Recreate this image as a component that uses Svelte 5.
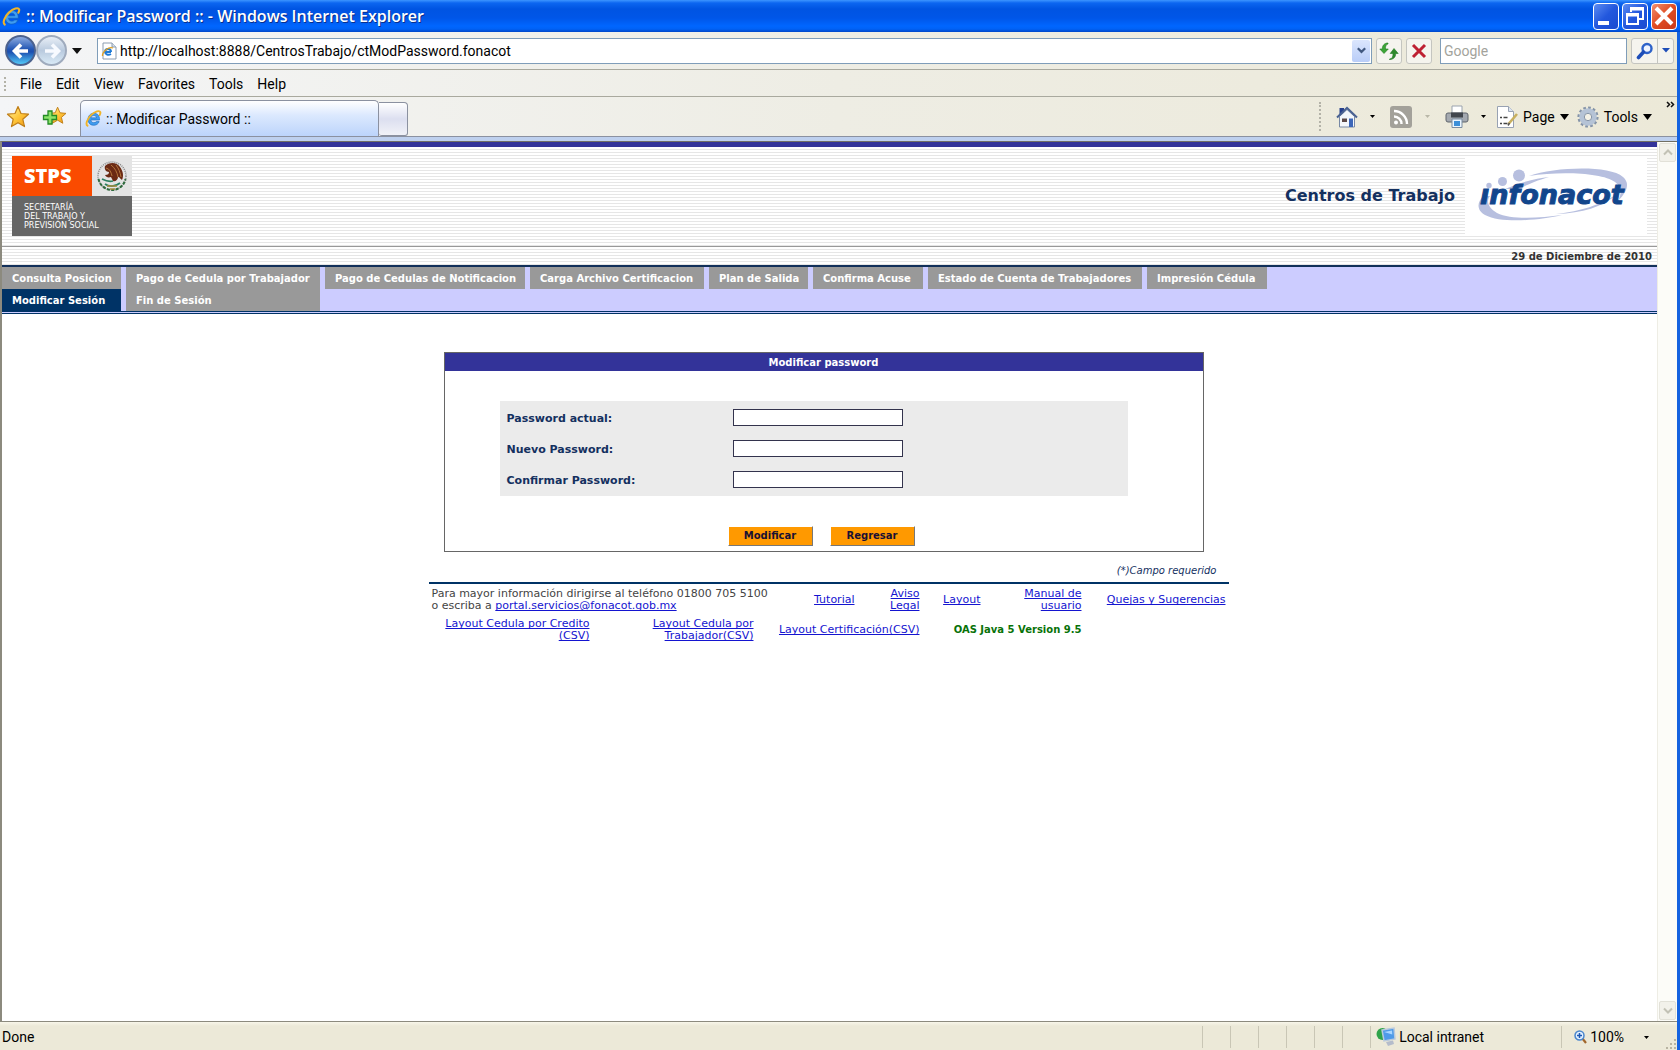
<script>
  const menus = ['File', 'Edit', 'View', 'Favorites', 'Tools', 'Help'];
  const sections = [
    'Consulta Posicion',
    'Pago de Cedula por Trabajador',
    'Pago de Cedulas de Notificacion',
    'Carga Archivo Certificacion',
    'Plan de Salida',
    'Confirma Acuse',
    'Estado de Cuenta de Trabajadores',
    'Impresión Cédula',
    'Modificar Sesión',
    'Fin de Sesión'
  ];
  const active = 'Modificar Sesión';
  const fields = [
    { id: 'actual', label: 'Password actual:' },
    { id: 'nuevo', label: 'Nuevo Password:' },
    { id: 'confirmar', label: 'Confirmar Password:' }
  ];
  const panes = [1, 2, 3, 4, 5, 6];
</script>

{#snippet ie(size)}
  <svg width={size} height={size} viewBox="0 0 18 18" aria-hidden="true">
    <path d="M15.400 10.600H6.200c.2 1.900 1.500 2.800 3.200 2.800 1.200 0 2-.4 2.500-1.100h3.100c-.9 2.500-3 3.900-5.700 3.900-3.700 0-6.100-2.500-6.100-6.200s2.500-6.600 6.200-6.600c3.900 0 6.200 2.700 6 7.200zM6.300 8.300h5.900c-.2-1.500-1.200-2.400-2.900-2.400-1.600 0-2.800.9-3 2.400z" fill="#3f9df0" stroke="#1460b8" stroke-width=".6" />
    <path d="M2.600 16.600C.3 15.200 2.300 9.200 6.600 5.200 10.800 1.300 15.500.2 16.200 2.200c.3.900 0 2-.7 3.200" fill="none" stroke="#f0b428" stroke-width="2" stroke-linecap="round" />
  </svg>
{/snippet}

{#snippet star()}
  <path d="M12 1.500l3 7 7.500.7-5.700 5 1.700 7.400L12 17.700l-6.500 3.900 1.700-7.400-5.700-5 7.500-.7z" fill="url(#gold)" stroke="#c07f18" stroke-width="1.200" stroke-linejoin="round" />
{/snippet}

<div class="window">
  <header class="titlebar">
    {@render ie(19)}
    <h1>:: Modificar Password :: - Windows Internet Explorer</h1>
    <div class="controls">
      <button class="ctl" aria-label="Minimize"><svg width="24" height="24" viewBox="0 0 24 24"><path d="M4 17h11v4H4z" fill="#fff" /></svg></button>
      <button class="ctl" aria-label="Restore"><svg width="24" height="24" viewBox="0 0 24 24"><path d="M8 8V4h12v11h-4M8 5.500h12" fill="none" stroke="#fff" stroke-width="2" /><path d="M4 10h11v10H4zM4 11.500h11" fill="none" stroke="#fff" stroke-width="2" /></svg></button>
      <button class="ctl close" aria-label="Close"><svg width="24" height="24" viewBox="0 0 24 24"><path d="M4 4l16 16M20 4L4 20" stroke="#fff" stroke-width="4" /></svg></button>
    </div>
  </header>

  <div class="frame">
    <div class="addressrow">
      <div class="travel">
        <button class="round back" aria-label="Back"><svg width="28" height="28" viewBox="0 0 28 28"><path d="M21 14H8M14 7.500L7.500 14l6.500 6.500" fill="none" stroke="#fff" stroke-width="3.600" /></svg></button>
        <button class="round forward" aria-label="Forward"><svg width="28" height="28" viewBox="0 0 28 28"><path d="M7 14h13M14 7.500l6.500 6.500-6.500 6.500" fill="none" stroke="#f7faff" stroke-width="3.600" /></svg></button>
        <button class="plain" aria-label="Recent pages"><svg width="10" height="6" viewBox="0 0 10 6"><path d="M0 0h10L5 6z" fill="#111" /></svg></button>
      </div>
      <div class="address">
        <svg width="16" height="18" viewBox="0 0 16 18" aria-hidden="true"><path d="M2 1h9l4 4v12H2z" fill="#fff" stroke="#8c9db0" /><path d="M11 1v4h4" fill="#d5dfea" stroke="#8c9db0" /><path d="M10 10H4c.2 2.500 3.300 3.500 6 2" fill="none" stroke="#1f7ad6" stroke-width="2" /><path d="M4 10C4 6 10 6 10 10" fill="none" stroke="#1f7ad6" stroke-width="2" /><path d="M1.500 14C1 10 8 4 12 6" fill="none" stroke="#e0a020" stroke-width="1.300" /></svg>
        <input type="text" aria-label="Address" value="http://localhost:8888/CentrosTrabajo/ctModPassword.fonacot" />
        <button class="drop" aria-label="Show addresses"><svg width="9" height="7" viewBox="0 0 9 7"><path d="M.8 1.200l3.700 3.700 3.700-3.700" fill="none" stroke="#41587f" stroke-width="2.200" /></svg></button>
      </div>
      <button class="box" aria-label="Refresh"><svg width="20" height="20" viewBox="0 0 20 20"><path d="M9 3C6.500 3.500 6.500 6 6.500 8h2.800L5 12.500.8 8h2.500c0-3.500 2-6 5.700-6z" fill="#3ba535" stroke="#207a20" stroke-width=".6" /><path d="M10.500 18c3 0 3.500-3 3.500-5.500h-2.800L15 7.500l4.200 5h-2.500c0 3.500-2 6-6.200 6z" fill="#2f8a2c" stroke="#207a20" stroke-width=".6" /></svg></button>
      <button class="box" aria-label="Stop"><svg width="18" height="18" viewBox="0 0 18 18"><path d="M3 3l12 12M15 3L3 15" stroke="#be2032" stroke-width="3" /></svg></button>
      <input class="search" type="text" aria-label="Search" placeholder="Google" />
      <div class="searchbtns">
        <button aria-label="Search the web"><svg width="18" height="18" viewBox="0 0 18 18"><circle cx="11" cy="6.500" r="4.500" fill="#eef4ff" stroke="#2d62c9" stroke-width="2.400" /><path d="M7.500 10L2.500 15.500" stroke="#1d4db8" stroke-width="3.600" stroke-linecap="round" /></svg></button>
        <button class="narrow" aria-label="Search options"><svg width="8" height="5" viewBox="0 0 8 5"><path d="M0 0h8L4 4.500z" fill="#1d4db8" /></svg></button>
      </div>
    </div>

    <nav class="menubar">
      <span class="grip"></span>
      {#each menus as m}<button>{m}</button>{/each}
    </nav>

    <div class="tabrow">
      <button class="plain" aria-label="Favorites center"><svg width="24" height="24" viewBox="0 0 24 24"><defs><linearGradient id="gold" x1="0" y1="0" x2="1" y2="1"><stop offset="0" stop-color="#fff3a8" /><stop offset=".5" stop-color="#ffc83c" /><stop offset="1" stop-color="#ee9410" /></linearGradient></defs>{@render star()}</svg></button>
      <button class="plain add" aria-label="Add to favorites"><svg width="24" height="24" viewBox="0 0 24 24"><g transform="translate(6 1) scale(.8)">{@render star()}</g><path d="M6 6h4v4.500h4.500v4H10V19H6v-4.500H1.500v-4H6z" fill="#8be368" stroke="#238a24" stroke-width="1.300" /></svg></button>
      <button class="tab">{@render ie(17)}<span>:: Modificar Password ::</span></button>
      <button class="newtab" aria-label="New tab"></button>
      <div class="commands">
        <span class="grip"></span>
        <button class="home" aria-label="Home">
          <svg width="22" height="22" viewBox="0 0 22 22"><path d="M3.500 2H8v7H3.500z" fill="#27408c" /><path d="M3.500 10.500l7.500-7 7.500 7V21h-15z" fill="#f4f7fb" stroke="#7788a5" /><path d="M1 11.500L11 2l10 9.500" fill="none" stroke="#4a6292" stroke-width="2" /><path d="M13 12.500h4V21h-4z" fill="#3c66b8" /><path d="M6 12.500h5V16H6z" fill="#5c4a48" /></svg>
          <svg width="5" height="3" viewBox="0 0 5 3"><path d="M0 0h5L2.500 3z" /></svg>
        </button>
        <button class="feed" aria-label="Feeds">
          <svg width="22" height="22" viewBox="0 0 22 22"><rect width="22" height="22" rx="3" fill="#a3a19a" /><circle cx="6" cy="16.500" r="2" fill="#fff" /><path d="M4 10.500a7.500 7.500 0 0 1 7.500 7.500M4 5a13 13 0 0 1 13 13" fill="none" stroke="#fff" stroke-width="2.400" /></svg>
          <svg width="5" height="3" viewBox="0 0 5 3"><path d="M0 0h5L2.500 3z" fill="#b9b7a8" /></svg>
        </button>
        <button class="print" aria-label="Print">
          <svg width="24" height="24" viewBox="0 0 24 24"><path d="M7 1h10v9H7z" fill="#fff" stroke="#9aa3ae" /><rect x="1" y="8" width="22" height="9" rx="2" fill="#a4a9b0" stroke="#5f656d" /><path d="M6 7.500h12v5H6z" fill="#41464d" /><path d="M7 14h10v8.500H7z" fill="#eaf5ff" stroke="#7b8ca0" /><path d="M9 16h6v5H9z" fill="#3c8fd8" /></svg>
          <svg width="5" height="3" viewBox="0 0 5 3"><path d="M0 0h5L2.500 3z" /></svg>
        </button>
        <button class="label">
          <svg width="22" height="24" viewBox="0 0 22 24"><path d="M1.500 1.500h11l5 5v16h-16z" fill="#fff" stroke="#98a2b3" /><path d="M12.500 1.500v5h5" fill="#dde5ef" stroke="#98a2b3" /><path d="M4 12.500h2M4 18.500h2M7.500 12.500h4M7.500 18.500h4" stroke="#444" stroke-width="1.400" /><path d="M21 9l-8.500 10" stroke="#c8b060" stroke-width="2.600" /><path d="M13.500 18L12 20.500" stroke="#555" stroke-width="1.500" /></svg>
          <span>Page</span>
          <svg width="9" height="6" viewBox="0 0 9 6"><path d="M0 0h9L4.500 6z" /></svg>
        </button>
        <button class="label">
          <svg width="22" height="22" viewBox="0 0 22 22"><circle cx="11" cy="11" r="9.400" fill="none" stroke="#8594a8" stroke-width="2.400" stroke-dasharray="2.700 2.200" /><circle cx="11" cy="11" r="6.200" fill="none" stroke="#b5c3d6" stroke-width="5" /><circle cx="11" cy="11" r="3.700" fill="#f3f1e6" stroke="#8594a8" /></svg>
          <span>Tools</span>
          <svg width="9" height="6" viewBox="0 0 9 6"><path d="M0 0h9L4.500 6z" /></svg>
        </button>
        <button class="more" aria-label="More commands"><svg width="9" height="7" viewBox="0 0 9 7"><path d="M1 1l2.500 2.500L1 6M5 1l2.500 2.500L5 6" fill="none" stroke="#111" stroke-width="1.500" /></svg></button>
      </div>
    </div>

    <div class="viewport">
      <main>
        <div class="banner">
          <div class="stps">
            <strong>STPS</strong>
            <span class="seal">
              <svg width="40" height="40" viewBox="0 0 40 40" aria-hidden="true">
                <circle cx="20" cy="20" r="14" fill="none" stroke="#8a8a8a" stroke-width="1.500" stroke-dasharray="1 1" />
                <path d="M6.500 23A13.800 13.800 0 0 0 33.500 23" fill="none" stroke="#2d6a3c" stroke-width="2" stroke-dasharray="3 1.500" />
                <path d="M13 10c4-4 12-4 15 1 3 4 4 9 2 13-2-1-2-3-4-3 0 3-3 5-5 4l-2-4c-3 1-5 0-6-2 3 0 4-1 4-3-3 0-5-3-4-6z" fill="#6b2a14" />
                <path d="M14 12c4 1 5 4 6 8M19 9c4 3 6 7 7 12M24 9c3 4 4 7 5 12" fill="none" stroke="#b5763c" />
                <path d="M10 23c4 2 7 3 11 2M13 28c4 3 10 3 15-1" fill="none" stroke="#2c8060" stroke-width="1.800" />
                <path d="M15 30h10M18 33h5" stroke="#a78a3c" stroke-width="1.500" />
              </svg>
            </span>
            <p>SECRETARÍA<br />DEL TRABAJO Y<br />PREVISIÓN SOCIAL</p>
          </div>
          <h2>Centros de Trabajo</h2>
          <svg class="infonacot" width="182" height="80" viewBox="0 0 182 80" role="img" aria-label="infonacot">
            <rect width="182" height="80" fill="#fff" />
            <g fill="#b7bfdf">
              <circle cx="24" cy="29.500" r="2.700" /><circle cx="37.500" cy="25.500" r="4.500" /><circle cx="54" cy="19.500" r="6" />
              <path d="M64 20C90 11 144 9 158 21c8 7 3 16-5 24 4-8 4-14-3-19C138 17 96 15 64 20z" />
              <path d="M40 33C60 25 72 22 84 21 70 25 62 29 54 33z" />
              <path d="M19 40C12 45 11 54 20 59c17 9 56 5 77 0-22 3-51 5-65-2-9-5-11-12-7-17z" />
              <path d="M91 58c26-3 43-9 60-19-14 12-33 18-60 19z" />
            </g>
            <text x="15" y="48" class="word">ınfonacot</text>
          </svg>
        </div>
        <div class="date">29 de Diciembre de 2010</div>

        <nav class="sections">
          {#each sections as s}
            <a href="#{s}" class:active={s === active}>{s}</a>
          {/each}
        </nav>

        <div class="content">
          <form onsubmit={(e) => e.preventDefault()}>
            <h3>Modificar password</h3>
            <div class="fields">
              {#each fields as f}
                <label for={f.id}>{f.label}</label>
                <input id={f.id} type="password" />
              {/each}
            </div>
            <div class="actions">
              <button type="submit">Modificar</button>
              <button type="button">Regresar</button>
            </div>
          </form>
          <p class="required">(*)Campo requerido</p>
          <footer>
            <div class="links first">
              <p>Para mayor información dirigirse al teléfono 01800 705 5100<br />o escriba a <a href="#mail">portal.servicios@fonacot.gob.mx</a></p>
              <a href="#tutorial">Tutorial</a>
              <a href="#aviso">Aviso<br />Legal</a>
              <a href="#layout">Layout</a>
              <a href="#manual">Manual de<br />usuario</a>
              <a href="#quejas">Quejas y Sugerencias</a>
            </div>
            <div class="links second">
              <a href="#credito">Layout Cedula por Credito<br />(CSV)</a>
              <a href="#trabajador">Layout Cedula por<br />Trabajador(CSV)</a>
              <a href="#certificacion">Layout Certificación(CSV)</a>
              <strong>OAS Java 5 Version 9.5</strong>
            </div>
          </footer>
        </div>
      </main>
      <div class="scrollbar">
        <button aria-label="Scroll up"><svg width="10" height="7" viewBox="0 0 10 7"><path d="M1 5.500l4-4 4 4" fill="none" stroke="#c2c1b5" stroke-width="2" /></svg></button>
        <button aria-label="Scroll down"><svg width="10" height="7" viewBox="0 0 10 7"><path d="M1 1.500l4 4 4-4" fill="none" stroke="#c2c1b5" stroke-width="2" /></svg></button>
      </div>
    </div>

    <div class="status">
      <span class="done">Done</span>
      {#each panes as p}<span class="pane"></span>{/each}
      <span class="zone">
        <svg width="20" height="20" viewBox="0 0 20 20" aria-hidden="true"><circle cx="6.500" cy="7" r="6" fill="#2fa34a" /><path d="M6 3l12-2 1 11-11 2z" fill="#4f9ae8" stroke="#b9c9dc" stroke-width="1.500" /><path d="M8 5l8-1.500.3 4z" fill="#a9d6ff" /><path d="M10 15l7-1.500 1 3.500-6 2z" fill="#b4bccb" /></svg>
        Local intranet
      </span>
      <button class="zoom">
        <svg width="13" height="14" viewBox="0 0 13 14" aria-hidden="true"><path d="M8 8l4 5" stroke="#a2672c" stroke-width="2.200" /><circle cx="5.500" cy="5.500" r="4.500" fill="#e2f0ff" stroke="#4a86cc" stroke-width="1.500" /><path d="M5.500 3v5M3 5.500h5" stroke="#1d58b4" stroke-width="1.500" /></svg>
        <span>100%</span>
        <svg width="5" height="3" viewBox="0 0 5 3"><path d="M0 0h5L2.500 3z" /></svg>
      </button>
      <svg class="size" width="12" height="12" viewBox="0 0 12 12" aria-hidden="true"><path d="M9 1h2v2H9zM9 5h2v2H9zM5 5h2v2H5zM9 9h2v2H9zM5 9h2v2H5zM1 9h2v2H1z" fill="#b8b4a2" /></svg>
    </div>
  </div>
</div>

<style>
  :global(body) { margin: 0; }
  * { box-sizing: border-box; }
  button, input { font: inherit; color: inherit; margin: 0; padding: 0; border: 0; background: none; border-radius: 0; }
  h1, h2, h3, p { margin: 0; }
  svg { display: block; flex: none; }
  a { text-decoration-skip-ink: none; }

  .window { display: flex; flex-direction: column; min-height: 100vh; font: 14px/18px Roboto, sans-serif; color: #000; }
  .titlebar { display: flex; align-items: center; gap: 5px; height: 32px; padding: 0 3px 0 2px; background: linear-gradient(#3d95ff 0, #0c66f0 3px, #0054e2 9px, #0056e8 18px, #0066ff 26px, #0062f6 29px, #0046c8 32px); }
  .titlebar h1 { flex: 1; font: 600 16px/20px "Open Sans", sans-serif; color: #fff; text-shadow: 1px 1px 0 #0a2f8c; }
  .controls { display: flex; gap: 3px; }
  .ctl { width: 26px; height: 27px; border: 1px solid #fff; border-radius: 4px; background: linear-gradient(135deg, #5c8cf2, #2257dd 50%, #1a4bd0); }
  .ctl.close { background: linear-gradient(135deg, #f09070, #e04c22 50%, #c8381a); }

  .frame { flex: 1; display: flex; flex-direction: column; border-right: 3px solid #1563e0; background: linear-gradient(90deg, #f4f5f7 0, #eeede4 50%, #ece9d8 100%); }
  .addressrow { display: flex; align-items: center; height: 38px; padding: 0 3px 0 5px; border-bottom: 1px solid #a9a99e; }
  .travel { display: flex; align-items: center; margin-right: 15px; }
  .round { width: 31px; height: 31px; border-radius: 50%; border: 2px solid #8593ad; display: grid; place-items: center; }
  .back { background: linear-gradient(#8cabe0, #2457b4 45%, #1c4fb0 55%, #52c8f8); border-color: #4c628e; }
  .forward { background: linear-gradient(#e8eef6, #b9cade 50%, #d9eaf6); border-color: #9fabbd; }
  .plain { display: grid; place-items: center; }
  .travel .plain { margin-left: 5px; }
  .address { flex: 1; display: flex; align-items: center; height: 26px; border: 1px solid #7f9db9; background: #fff; padding: 0 1px 0 3px; gap: 3px; }
  .address input { flex: 1; min-width: 0; }
  input:focus { outline: none; }
  .drop { width: 18px; height: 22px; display: grid; place-items: center; background: linear-gradient(#dbe6fd, #b9cdf8); border-radius: 2px; }
  .box { width: 26px; height: 26px; margin-left: 4px; border: 1px solid #c4c5c0; border-radius: 3px; background: #f5f4ee; display: grid; place-items: center; }
  .search { width: 187px; height: 26px; margin: 0 4px 0 8px; padding: 0 3px; border: 1px solid #7f9db9; background: #fff; }
  .search::placeholder { color: #a3a39c; opacity: 1; }
  .searchbtns { display: flex; height: 26px; border: 1px solid #c4c5c0; border-radius: 3px; background: #f5f4ee; }
  .searchbtns button { width: 25px; display: grid; place-items: center; }
  .searchbtns .narrow { width: 16px; border-left: 1px solid #c4c5c0; }

  .menubar { display: flex; align-items: center; gap: 14px; height: 27px; padding: 2px 0 0 4px; border-bottom: 1px solid #a9a99e; }
  .grip { width: 1px; align-self: stretch; margin: 5px 0; border-left: 2px dotted #b3b2a8; }

  .tabrow { display: flex; align-items: center; height: 40px; padding-left: 6px; border-bottom: 1px solid #8b91a0; }
  .add { margin: 0 14px 0 12px; }
  .tab { align-self: flex-end; width: 299px; height: 36px; display: flex; align-items: center; gap: 4px; padding: 0 4px; border: 1px solid #8b91a0; border-bottom: 0; border-radius: 5px 5px 0 0; background: linear-gradient(#fff, #dce9fe 40%, #bcd4fb); }
  .newtab { align-self: flex-end; width: 29px; height: 34px; border: 1px solid #8b91a0; border-left: 0; border-radius: 0 4px 3px 3px; background: linear-gradient(#fff, #dcdff0 50%, #f1f2f8); }
  .commands { flex: 1; align-self: stretch; display: flex; align-items: center; justify-content: flex-end; padding-right: 2px; }
  .commands .grip { margin-right: 15px; }
  .commands button { display: flex; align-items: center; }
  .home { gap: 12px; margin-right: 15px; }
  .feed { gap: 13px; margin-right: 15px; }
  .print { gap: 12px; margin-right: 10px; }
  .label { gap: 5px; margin-right: 8px; }
  .commands .more { align-self: flex-start; margin: 4px 0 0 6px; }

  .viewport { flex: 1; display: flex; border-top: 1px solid #716f64; border-left: 2px solid #8c8a7e; border-bottom: 1px solid #8c8a7e; margin-top: 4px; background: #fff; box-shadow: 0 -4px 0 #bed0ee; }
  main { flex: 1; font-family: Verdana, "DejaVu Sans", sans-serif; }
  .scrollbar { width: 20px; display: flex; flex-direction: column; justify-content: space-between; background: #fcfcf8; border-left: 1px solid #eeede5; padding: 1px; }
  .scrollbar button { height: 19px; display: grid; place-items: center; border: 1px solid #e2e1d8; border-radius: 2px; background: #f2f1ea; }

  .banner { display: flex; align-items: center; height: 105px; padding: 9px 10px 10px; border-top: 5px solid #333399; border-bottom: 1px solid #999; background: repeating-linear-gradient(#fff 0 2px, #e6e6e6 2px 3px); }
  .stps { display: grid; grid-template: 40px 40px / 80px 40px; color: #fff; }
  .stps strong { background: #fa4b00; padding-left: 12px; font: 800 20px/40px "Open Sans", sans-serif; }
  .seal { background: #e4e4e4; }
  .stps p { grid-column: span 2; background: #666; padding: 7px 0 0 12px; font-size: 8px; line-height: 9px; }
  .banner h2 { flex: 1; text-align: right; padding-right: 10px; font-size: 16px; line-height: 20px; color: #14305f; }
  .word { font: italic bold 27px "DejaVu Sans", sans-serif; fill: #12468c; stroke: #12468c; stroke-width: 1px; }
  .date { height: 18px; padding-right: 5px; text-align: right; font-size: 10px; line-height: 20px; font-weight: bold; color: #333; background: repeating-linear-gradient(#fff 0 2px, #e6e6e6 2px 3px); }

  .sections { display: grid; grid-template-columns: 119px 194px 200px 174px 99px 110px 214px 120px; column-gap: 5px; border-top: 2px solid #12305a; border-bottom: 3px double #003366; background: #ccccff; }
  .sections a { padding: 2px 0 0 10px; background: #999; color: #fff; font-size: 10px; line-height: 20px; font-weight: bold; text-decoration: none; white-space: nowrap; }
  .sections a.active { background: #003366; }

  .content { max-width: 802px; margin: 38px auto 0; padding-right: 2px; }
  form { margin: 0 25px 0 15px; border: 1px solid #666; }
  form h3 { background: #333399; color: #fff; text-align: center; font-size: 10px; padding-top: 2px; line-height: 16px; }
  .fields { display: grid; grid-template-columns: 226px 170px; grid-auto-rows: 17px; row-gap: 14px; align-items: center; margin: 30px 75px 0 55px; padding: 8px 7px; background: #ebebeb; }
  .fields label { font-size: 11px; line-height: 17px; padding-top: 1px; font-weight: bold; color: #14305f; }
  .fields input { height: 17px; border: 1px solid #33334d; background: #fff; }
  .actions { display: flex; justify-content: center; gap: 17px; margin: 30px 5px 5px 0; }
  .actions button { width: 85px; height: 20px; background: #ff9900; border: 1px solid; border-color: #fff #777 #777 #fff; font-size: 10px; line-height: 16px; font-weight: bold; color: #1a1033; }
  .required { padding: 8px 12px 0 0; text-align: right; font-size: 10px; line-height: 22px; font-style: italic; color: #14305f; }
  footer { padding-top: 1px; border-top: 2px solid #003366; font-size: 11px; line-height: 12px; color: #444; }
  .links { display: grid; align-items: center; text-align: right; height: 30px; }
  .links > * { padding-right: 3px; white-space: nowrap; }
  .links a { color: #1414d0; }
  .links p { text-align: left; padding-left: 3px; }
  .first { grid-template-columns: 345px 84px 65px 61px 101px 144px; }
  .second { grid-template-columns: 164px 164px 166px 162px; }
  .second strong { color: #087208; font-size: 10px; }

  .status { display: flex; align-items: center; height: 28px; padding: 2px 0 0 2px; background: linear-gradient(#f8f6ea, #ece9d8 4px); }
  .done { flex: 1; }
  .pane { width: 28px; height: 22px; border-left: 1px solid #c9c6b5; }
  .zone { display: flex; align-items: center; gap: 3px; width: 191px; height: 22px; padding-left: 5px; border-left: 1px solid #c9c6b5; }
  .zoom { display: flex; align-items: center; height: 22px; padding-left: 12px; border-left: 1px solid #c9c6b5; }
  .zoom span { margin: 0 20px 0 3px; }
  .size { align-self: flex-end; margin-left: 16px; }
</style>
